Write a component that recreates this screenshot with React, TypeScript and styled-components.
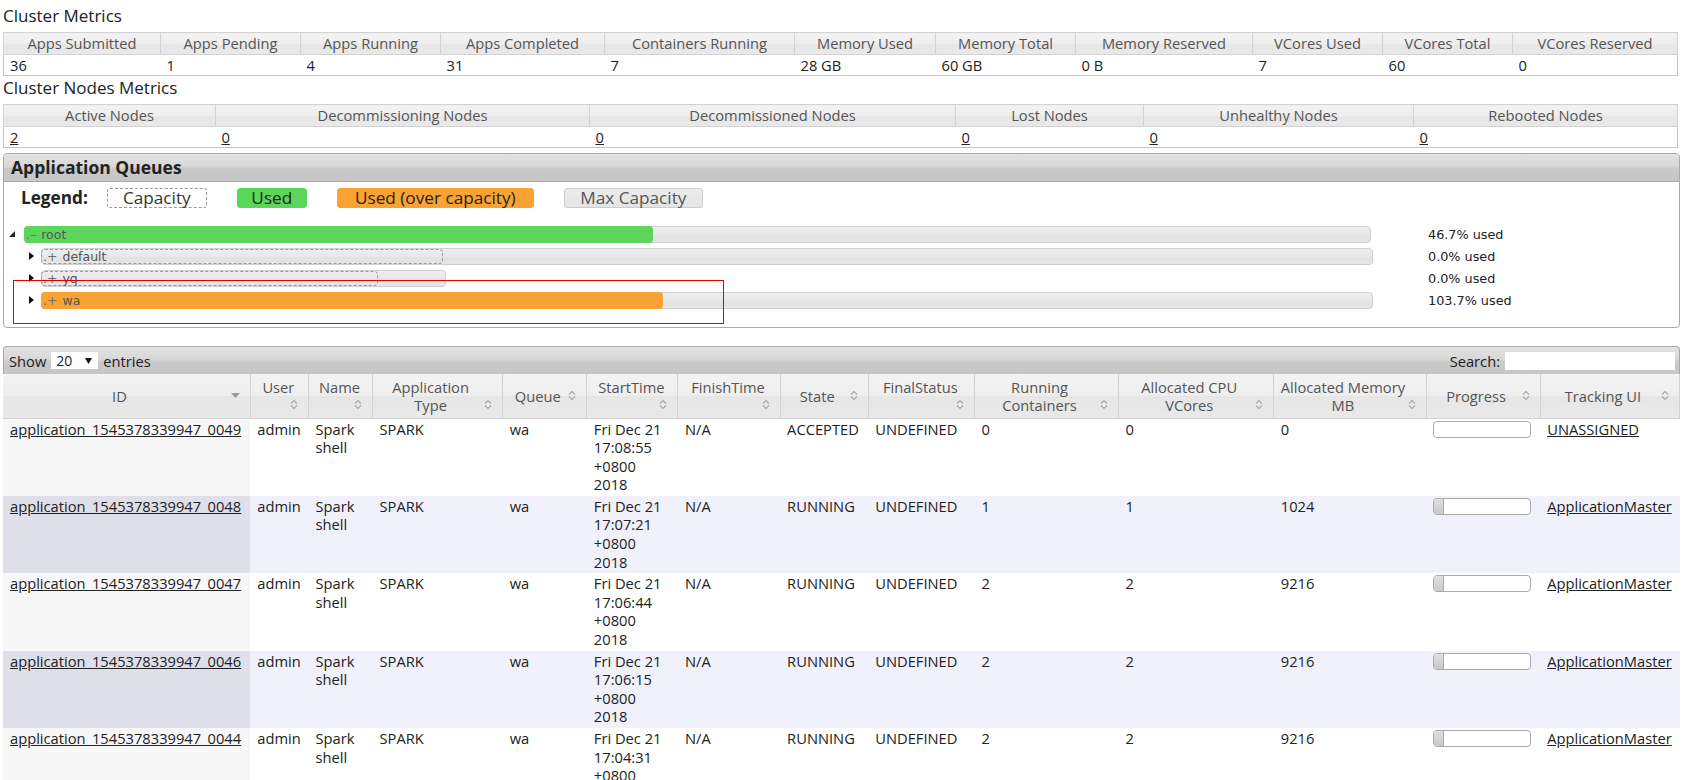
import React from 'react';
import styled, { createGlobalStyle, css } from 'styled-components';

const GlobalStyle = createGlobalStyle`
  body {
    margin: 0;
    background: #fff;
    font-family: "Open Sans", "Liberation Sans", sans-serif;
    font-size: 14.7px;
    color: #222;
  }
  * { box-sizing: border-box; }
`;

const Page = styled.div`
  padding: 0 8px 0 3px;
`;

const SectionTitle = styled.h3<{ $first?: boolean }>`
  margin: 0 0 4px;
  padding-top: ${(p) => (p.$first ? 4 : 0)}px;
  font-size: 17px;
  font-weight: normal;
  line-height: 24px;
  color: #222;
`;

const headGradient = css`
  background: linear-gradient(to bottom, #f3f3f3 0%, #eeeeee 50%, #e6e6e6 51%, #e9e9e9 100%);
`;

const barGradient = css`
  background: linear-gradient(to bottom, #e2e2e2 0%, #d8d8d8 45%, #c9c9c9 55%, #c6c6c6 100%);
`;

const MetricsTable = styled.table`
  width: calc(100% - 3px);
  border-collapse: collapse;
  table-layout: fixed;
  border: 1px solid #c4c4c4;
`;

const MetricsHead = styled.th`
  ${headGradient};
  border: 1px solid #d3d3d3;
  color: #555;
  font-weight: normal;
  height: 22px;
  padding: 0;
  line-height: 21px;
  white-space: nowrap;
`;

const MetricsCell = styled.td`
  height: 20px;
  padding: 0 6px;
  line-height: 20px;
  color: #222;
`;

const PlainLink = styled.a`
  color: #222;
  text-decoration: underline;
`;

/* Application queues */

const Panel = styled.div`
  position: relative;
  margin-top: 5px;
  border: 1px solid #aaa;
  border-radius: 4px;
`;

const PanelHeader = styled.div`
  ${barGradient};
  height: 28px;
  border-bottom: 1px solid #aaa;
  border-radius: 3px 3px 0 0;
  padding-left: 7px;
  font-size: 17.5px;
  font-weight: bold;
  line-height: 27px;
  color: #222;
`;

const PanelBody = styled.div`
  padding: 4px 0 16px;
`;

const Legend = styled.div`
  display: flex;
  align-items: center;
  padding-left: 17px;
  font-size: 17.2px;
`;

const LegendLabel = styled.span`
  font-weight: bold;
  margin-right: 19px;
  color: #222;
`;

type LegendKind = 'capacity' | 'used' | 'over' | 'max';

const legendStyles: Record<LegendKind, ReturnType<typeof css>> = {
  capacity: css`
    background: #fff;
    border: 1px dashed #999;
    color: #333;
  `,
  used: css`
    background: #5bd65b;
    border: 1px solid #5bd65b;
    color: #222;
  `,
  over: css`
    background: #faa234;
    border: 1px solid #faa234;
    color: #222;
  `,
  max: css`
    background: linear-gradient(to bottom, #ececec, #e4e4e4);
    border: 1px solid #ccc;
    color: #555;
  `,
};

const LegendItem = styled.span<{ $kind: LegendKind; $w: number }>`
  display: inline-flex;
  justify-content: center;
  align-items: center;
  width: ${(p) => p.$w}px;
  height: 20px;
  margin-right: 30px;
  border-radius: 3px;
  line-height: 18px;
  ${(p) => legendStyles[p.$kind]};
`;

const Tree = styled.div`
  margin-top: 14px;
  display: flex;
  flex-direction: column;
`;

const QueueRow = styled.div`
  display: grid;
  grid-template-columns: 1424px 1fr;
  height: 22px;
  align-items: center;
`;

const QueueMain = styled.div<{ $level: number; $endGap: number }>`
  display: flex;
  align-items: center;
  padding-left: ${(p) => p.$level * 17}px;
  padding-right: ${(p) => p.$endGap}px;
`;

const Toggle = styled.span<{ $pad: number }>`
  display: flex;
  align-items: center;
  width: 20px;
  height: 17px;
  padding-left: ${(p) => p.$pad}px;
`;

const BarSlot = styled.div`
  position: relative;
  flex: 1;
  height: 17px;
`;

const Track = styled.div`
  height: 17px;
  border: 1px solid #cfcfcf;
  border-radius: 4px;
  background: linear-gradient(to bottom, #eeeeee 0%, #e8e8e8 50%, #e2e2e2 51%, #e6e6e6 100%);
`;

const CapacityBox = styled.div`
  position: absolute;
  left: 0;
  top: 1px;
  height: 15px;
  border: 1px dashed #9a9a9a;
  border-radius: 4px;
`;

const UsedFill = styled.div<{ $over: boolean }>`
  position: absolute;
  left: 0;
  top: 0;
  height: 17px;
  border-radius: 4px;
  background: ${(p) => (p.$over ? '#faa234' : '#5bd65b')};
`;

const QueueLabel = styled.span`
  position: absolute;
  left: 2px;
  top: 0;
  line-height: 17px;
  font-family: "DejaVu Sans", Verdana, sans-serif;
  font-size: 12.5px;
  color: #555;
  white-space: nowrap;
`;

const QueueMark = styled.span`
  color: #6e6e6e;
  margin-right: 5px;
`;

const QueuePercent = styled.span`
  font-family: "DejaVu Sans", Verdana, sans-serif;
  font-size: 12.8px;
  color: #222;
`;

const Annotation = styled.div`
  position: absolute;
  left: 9px;
  top: 126px;
  width: 711px;
  height: 44px;
  border: 1px solid #e40000;
  pointer-events: none;
`;

/* Applications table */

const DataWrap = styled.div`
  margin-top: 18px;
`;

const Toolbar = styled.div`
  ${barGradient};
  display: flex;
  justify-content: space-between;
  align-items: center;
  height: 28px;
  border: 1px solid #aaa;
  border-bottom: none;
  border-radius: 4px 4px 0 0;
  padding: 0 4px 0 5px;
  color: #222;
`;

const ToolGroup = styled.div`
  display: flex;
  align-items: center;
  gap: 5px;
`;

const SelectBox = styled.span`
  display: inline-flex;
  align-items: center;
  justify-content: space-between;
  width: 47px;
  height: 17px;
  padding: 0 6px 0 5px;
  background: #fff;
  font-size: 14px;
  line-height: 17px;
`;

const SearchBox = styled.span`
  display: inline-block;
  width: 170px;
  height: 18px;
  background: #fff;
`;

const AppTable = styled.table`
  width: 100%;
  border-collapse: collapse;
  table-layout: fixed;
`;

type HeadLayout = 'inline' | 'stack' | 'wrap';

const Th = styled.th`
  ${headGradient};
  height: 44px;
  padding: 3px 8px 3px 6px;
  border-right: 1px solid #d3d3d3;
  border-bottom: 1px solid #d3d3d3;
  color: #555;
  font-weight: normal;
  vertical-align: middle;
`;

const ThInner = styled.div<{ $layout: HeadLayout }>`
  display: flex;
  ${(p) =>
    p.$layout === 'stack'
      ? css`
          flex-direction: column;
        `
      : p.$layout === 'wrap'
      ? css`
          align-items: flex-end;
        `
      : css`
          align-items: center;
        `}
`;

const ThText = styled.span`
  flex: 1;
  text-align: center;
  line-height: 18px;
`;

const SortSlot = styled.span`
  display: flex;
  align-items: center;
  justify-content: center;
  align-self: flex-end;
  width: 12px;
  height: 18px;
`;

const Td = styled.td<{ $bg: string }>`
  background: ${(p) => p.$bg};
  padding: 1px 6px 2px 7px;
  line-height: 18.6px;
  vertical-align: top;
  color: #222;
`;

const Progress = styled.div`
  width: 98px;
  height: 17px;
  margin-top: 1px;
  border: 1px solid #aaa;
  border-radius: 4px;
  background: #fff;
  overflow: hidden;
`;

const ProgressFill = styled.div`
  height: 100%;
  border-right: 1px solid #aaa;
  background: linear-gradient(to bottom, #e0e0e0, #c9c9c9);
`;

const SortBoth = () => (
  <svg width="8" height="11" viewBox="0 0 8 11">
    <path d="M1 4.5 L4 1.5 L7 4.5 M1 6.5 L4 9.5 L7 6.5" fill="none" stroke="#a8a8a8" strokeWidth="1.1" />
  </svg>
);

const SortDesc = () => (
  <svg width="9" height="5" viewBox="0 0 9 5">
    <path d="M0 0 H9 L4.5 5 Z" fill="#9a9a9a" />
  </svg>
);

const OpenArrow = () => (
  <svg width="6" height="6" viewBox="0 0 6 6">
    <path d="M6 0 V6 H0 Z" fill="#222" />
  </svg>
);

const ClosedArrow = () => (
  <svg width="5" height="8" viewBox="0 0 5 8">
    <path d="M0 0 L5 4 L0 8 Z" fill="#111" />
  </svg>
);

const SelectArrow = () => (
  <svg width="7" height="6" viewBox="0 0 7 6">
    <path d="M0 0 H7 L3.5 6 Z" fill="#111" />
  </svg>
);

const clusterCols = [157, 140, 140, 164, 190, 141, 140, 177, 130, 130, 165];
const clusterMetrics = [
  ['Apps Submitted', '36'],
  ['Apps Pending', '1'],
  ['Apps Running', '4'],
  ['Apps Completed', '31'],
  ['Containers Running', '7'],
  ['Memory Used', '28 GB'],
  ['Memory Total', '60 GB'],
  ['Memory Reserved', '0 B'],
  ['VCores Used', '7'],
  ['VCores Total', '60'],
  ['VCores Reserved', '0'],
];

const nodeCols = [212, 374, 366, 188, 270, 264];
const nodeMetrics = [
  ['Active Nodes', '2'],
  ['Decommissioning Nodes', '0'],
  ['Decommissioned Nodes', '0'],
  ['Lost Nodes', '0'],
  ['Unhealthy Nodes', '0'],
  ['Rebooted Nodes', '0'],
];

interface Queue {
  name: string;
  level: number;
  max: number;
  cap: number;
  used: number;
  over?: boolean;
  pct: string;
}

const queues: Queue[] = [
  { name: 'root', level: 0, max: 100, cap: 100, used: 46.7, pct: '46.7% used' },
  { name: 'default', level: 1, max: 100, cap: 30.2, used: 0, pct: '0.0% used' },
  { name: 'yq', level: 1, max: 30.4, cap: 25.3, used: 0, pct: '0.0% used' },
  { name: 'wa', level: 1, max: 100, cap: 45, used: 46.7, over: true, pct: '103.7% used' },
];

interface Column {
  title: string[];
  width: number;
  layout: HeadLayout;
  sorted?: boolean;
}

const appCols: Column[] = [
  { title: ['ID'], width: 247, layout: 'inline', sorted: true },
  { title: ['User'], width: 58, layout: 'stack' },
  { title: ['Name'], width: 64, layout: 'stack' },
  { title: ['Application', 'Type'], width: 130, layout: 'wrap' },
  { title: ['Queue'], width: 84, layout: 'inline' },
  { title: ['StartTime'], width: 91, layout: 'stack' },
  { title: ['FinishTime'], width: 102, layout: 'stack' },
  { title: ['State'], width: 88, layout: 'inline' },
  { title: ['FinalStatus'], width: 106, layout: 'stack' },
  { title: ['Running', 'Containers'], width: 144, layout: 'wrap' },
  { title: ['Allocated CPU', 'VCores'], width: 155, layout: 'wrap' },
  { title: ['Allocated Memory', 'MB'], width: 152, layout: 'wrap' },
  { title: ['Progress'], width: 114, layout: 'inline' },
  { title: ['Tracking UI'], width: 139, layout: 'inline' },
];

interface App {
  id: string;
  time: string;
  state: string;
  containers: string;
  vcores: string;
  memory: string;
  progress: number;
  tracking: string;
}

const apps: App[] = [
  { id: '0049', time: '17:08:55', state: 'ACCEPTED', containers: '0', vcores: '0', memory: '0', progress: 0, tracking: 'UNASSIGNED' },
  { id: '0048', time: '17:07:21', state: 'RUNNING', containers: '1', vcores: '1', memory: '1024', progress: 10, tracking: 'ApplicationMaster' },
  { id: '0047', time: '17:06:44', state: 'RUNNING', containers: '2', vcores: '2', memory: '9216', progress: 10, tracking: 'ApplicationMaster' },
  { id: '0046', time: '17:06:15', state: 'RUNNING', containers: '2', vcores: '2', memory: '9216', progress: 10, tracking: 'ApplicationMaster' },
  { id: '0044', time: '17:04:31', state: 'RUNNING', containers: '2', vcores: '2', memory: '9216', progress: 10, tracking: 'ApplicationMaster' },
];

const MetricsBlock = ({ cols, rows, link }: { cols: number[]; rows: string[][]; link?: boolean }) => (
  <MetricsTable>
    <colgroup>
      {cols.map((w, i) => (
        <col key={i} style={{ width: w }} />
      ))}
    </colgroup>
    <thead>
      <tr>
        {rows.map(([label]) => (
          <MetricsHead key={label}>{label}</MetricsHead>
        ))}
      </tr>
    </thead>
    <tbody>
      <tr>
        {rows.map(([label, value]) => (
          <MetricsCell key={label}>{link ? <PlainLink href="#">{value}</PlainLink> : value}</MetricsCell>
        ))}
      </tr>
    </tbody>
  </MetricsTable>
);

const QueueLine = ({ q }: { q: Queue }) => (
  <QueueRow>
    <QueueMain $level={q.level} $endGap={q.level === 0 ? 57 : 55}>
      <Toggle $pad={q.level === 0 ? 5 : 8}>{q.level === 0 ? <OpenArrow /> : <ClosedArrow />}</Toggle>
      <BarSlot>
        <Track style={{ width: `${q.max}%` }} />
        {q.level > 0 && <CapacityBox style={{ width: `${q.cap}%` }} />}
        {q.used > 0 && <UsedFill $over={!!q.over} style={{ width: `${q.used}%` }} />}
        <QueueLabel>
          <QueueMark>.{q.level === 0 ? '–' : '+'}</QueueMark>
          {q.name}
        </QueueLabel>
      </BarSlot>
    </QueueMain>
    <QueuePercent>{q.pct}</QueuePercent>
  </QueueRow>
);

const App = () => (
  <Page>
    <GlobalStyle />
    <SectionTitle $first>Cluster Metrics</SectionTitle>
    <MetricsBlock cols={clusterCols} rows={clusterMetrics} />
    <SectionTitle>Cluster Nodes Metrics</SectionTitle>
    <MetricsBlock cols={nodeCols} rows={nodeMetrics} link />

    <Panel>
      <PanelHeader>Application Queues</PanelHeader>
      <PanelBody>
        <Legend>
          <LegendLabel>Legend:</LegendLabel>
          <LegendItem $kind="capacity" $w={100}>Capacity</LegendItem>
          <LegendItem $kind="used" $w={70}>Used</LegendItem>
          <LegendItem $kind="over" $w={197}>Used (over capacity)</LegendItem>
          <LegendItem $kind="max" $w={139}>Max Capacity</LegendItem>
        </Legend>
        <Tree>
          {queues.map((q) => (
            <QueueLine key={q.name} q={q} />
          ))}
        </Tree>
      </PanelBody>
      <Annotation />
    </Panel>

    <DataWrap>
      <Toolbar>
        <ToolGroup>
          Show
          <SelectBox>
            20 <SelectArrow />
          </SelectBox>
          entries
        </ToolGroup>
        <ToolGroup>
          Search:
          <SearchBox />
        </ToolGroup>
      </Toolbar>
      <AppTable>
        <colgroup>
          {appCols.map((c, i) => (
            <col key={i} style={{ width: c.width }} />
          ))}
        </colgroup>
        <thead>
          <tr>
            {appCols.map((c) => (
              <Th key={c.title.join(' ')}>
                <ThInner $layout={c.layout}>
                  <ThText>
                    {c.title.map((t, i) => (
                      <React.Fragment key={t}>
                        {i > 0 && <br />}
                        {t}
                      </React.Fragment>
                    ))}
                  </ThText>
                  <SortSlot>{c.sorted ? <SortDesc /> : <SortBoth />}</SortSlot>
                </ThInner>
              </Th>
            ))}
          </tr>
        </thead>
        <tbody>
          {apps.map((a, i) => {
            const even = i % 2 === 1;
            const bg = even ? '#f1f1fc' : '#fff';
            const sortedBg = even ? '#dfdfea' : '#f7f7f7';
            return (
              <tr key={a.id}>
                <Td $bg={sortedBg}>
                  <PlainLink href="#">application_1545378339947_{a.id}</PlainLink>
                </Td>
                <Td $bg={bg}>admin</Td>
                <Td $bg={bg}>Spark shell</Td>
                <Td $bg={bg}>SPARK</Td>
                <Td $bg={bg}>wa</Td>
                <Td $bg={bg}>
                  Fri Dec 21
                  <br />
                  {a.time}
                  <br />
                  +0800
                  <br />
                  2018
                </Td>
                <Td $bg={bg}>N/A</Td>
                <Td $bg={bg}>{a.state}</Td>
                <Td $bg={bg}>UNDEFINED</Td>
                <Td $bg={bg}>{a.containers}</Td>
                <Td $bg={bg}>{a.vcores}</Td>
                <Td $bg={bg}>{a.memory}</Td>
                <Td $bg={bg}>
                  <Progress>{a.progress > 0 && <ProgressFill style={{ width: a.progress }} />}</Progress>
                </Td>
                <Td $bg={bg}>
                  <PlainLink href="#">{a.tracking}</PlainLink>
                </Td>
              </tr>
            );
          })}
        </tbody>
      </AppTable>
    </DataWrap>
  </Page>
);

export default App;
